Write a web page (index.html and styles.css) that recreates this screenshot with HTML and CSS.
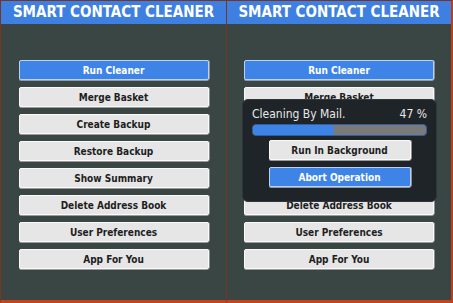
FILE: index.html
```html
<!DOCTYPE html>
<html lang="en">
<head>
  <meta charset="UTF-8">
  <title>Smart Contact Cleaner</title>
  <link rel="stylesheet" href="styles.css">
</head>
<body>
  <div class="screens">
    <div class="screen">
      <div class="title">SMART CONTACT CLEANER</div>
      <div class="menu">
        <button class="btn primary">Run Cleaner</button>
        <button class="btn">Merge Basket</button>
        <button class="btn">Create Backup</button>
        <button class="btn">Restore Backup</button>
        <button class="btn">Show Summary</button>
        <button class="btn">Delete Address Book</button>
        <button class="btn">User Preferences</button>
        <button class="btn">App For You</button>
      </div>
    </div>

    <div class="screen">
      <div class="title">SMART CONTACT CLEANER</div>
      <div class="menu">
        <button class="btn primary">Run Cleaner</button>
        <button class="btn">Merge Basket</button>
        <button class="btn">Create Backup</button>
        <button class="btn">Restore Backup</button>
        <button class="btn">Show Summary</button>
        <button class="btn">Delete Address Book</button>
        <button class="btn">User Preferences</button>
        <button class="btn">App For You</button>
      </div>

      <div class="progress-dialog">
        <div class="status">
          <span>Cleaning By Mail.</span>
          <span>47 %</span>
        </div>
        <div class="bar"><div class="fill" style="width: 47%"></div></div>
        <button class="btn small">Run In Background</button>
        <button class="btn small primary">Abort Operation</button>
      </div>
    </div>
  </div>
</body>
</html>
```

FILE: styles.css
```css
body {
  margin: 0;
  background: #3a4643;
  font-family: "DejaVu Sans Condensed", "DejaVu Sans", sans-serif;
}
.screens {
  display: flex;
  width: 453px;
  height: 303px;
}
.screen {
  position: relative;
  width: 226px;
  height: 303px;
  box-sizing: border-box;
  border-left: 1px solid #7a3520;
  border-top: 1px solid #7a3520;
  border-bottom: 3px solid #c2431c;
  background: #3a4643;
  display: flex;
  flex-direction: column;
}
.screen + .screen {
  width: 227px;
  border-right: 2px solid #b8401c;
}
.title {
  height: 23px;
  background: #3e80e2;
  color: #fff;
  font-weight: bold;
  font-size: 15px;
  line-height: 23px;
  text-align: center;
}
.menu {
  display: flex;
  flex-direction: column;
  align-items: center;
  gap: 7px;
  padding-top: 36px;
}
.btn {
  width: 190px;
  height: 20px;
  padding: 0;
  box-sizing: border-box;
  font-family: inherit;
  font-weight: bold;
  font-size: 10px;
  color: #1e1e1e;
  background: #e6e6e6;
  border: 1px solid #fafafa;
  border-radius: 2px;
  box-shadow: 0 1px 0 #9a9a9a, 1px 0 0 #8d8d8d;
}
.btn.primary {
  background: #3e84e6;
  color: #fff;
  border-color: #b9d2f4;
}
.progress-dialog {
  position: absolute;
  left: 15px;
  top: 98px;
  width: 195px;
  height: 103px;
  box-sizing: border-box;
  padding: 7px 9px 0;
  background: #1f2429;
  border: 1px solid #30363b;
  border-radius: 6px;
  display: flex;
  flex-direction: column;
  align-items: center;
}
.status {
  align-self: stretch;
  display: flex;
  justify-content: space-between;
  color: #e8e8e8;
  font-size: 12px;
  line-height: 15px;
}
.bar {
  align-self: stretch;
  height: 12px;
  margin-top: 2px;
  background: #7a7a7a;
  border: 1px solid #2f5f9f;
  border-radius: 4px;
  box-sizing: border-box;
  overflow: hidden;
}
.fill {
  height: 100%;
  background: #3e84e6;
  border-radius: 4px;
}
.btn.small {
  width: 142px;
  margin-top: 4px;
}
.btn.small + .btn.small {
  margin-top: 7px;
}
```
